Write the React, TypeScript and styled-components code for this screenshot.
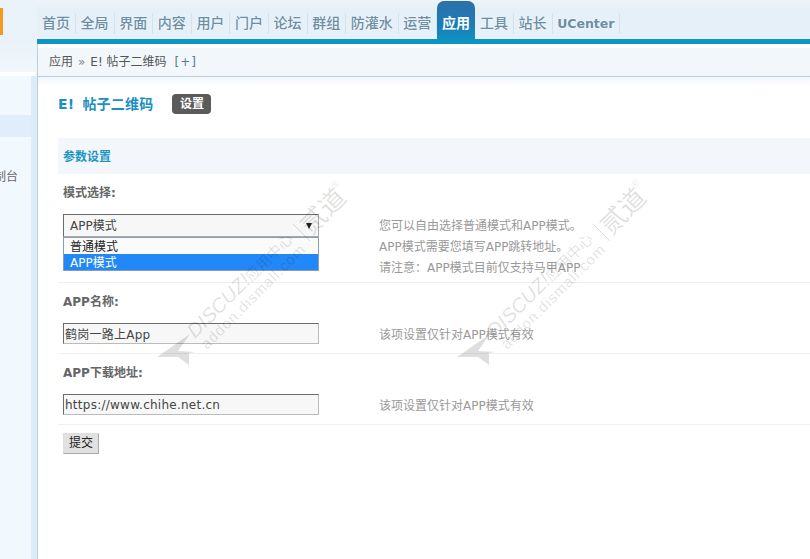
import React, { ReactElement } from 'react';
import styled, { createGlobalStyle } from 'styled-components';

const GlobalStyle = createGlobalStyle`
  html, body {
    margin: 0;
    padding: 0;
    height: 100%;
    overflow: hidden;
    background: #fff;
  }

  body {
    font: 12px/1.5 "DejaVu Sans", "Noto Sans CJK SC", sans-serif;
    color: #666;
  }
`;

const Page = styled.div`
  position: relative;
  display: flex;
  width: 100%;
  height: 100vh;
  overflow: hidden;
`;

const SideColumn = styled.aside`
  display: flex;
  flex-direction: column;
  flex: 0 0 37px;
  width: 37px;
`;

const LogoArea = styled.div`
  flex: 0 0 72px;
  padding-top: 8px;
  box-sizing: border-box;
  background: linear-gradient(#eaf2f9, #e9f2fa 40px, #f1f7fc);
`;

const LogoMark = styled.div`
  width: 3px;
  height: 27px;
  background: #f39a1c;
`;

const SideGap = styled.div`
  flex: 0 0 4px;
  background: #fff;
  border-right: 1px solid #e8f0f7;
`;

const SideMenu = styled.nav`
  flex: 1;
  display: flex;
  flex-direction: column;
  padding-top: 39px;
  background: #f2f9fe;
  border-right: 6px solid #dcedf9;
`;

const SideItem = styled.div<{ $active?: boolean }>`
  display: flex;
  justify-content: flex-end;
  height: 22px;
  line-height: 22px;
  padding-right: 13px;
  white-space: nowrap;
  color: #666;
  background: ${({ $active }) => ($active ? '#dfeefa' : 'transparent')};
  margin-bottom: ${({ $active }) => ($active ? '29px' : '0')};
`;

const MainColumn = styled.main`
  flex: 1;
  min-width: 0;
  display: flex;
  flex-direction: column;
`;

const TopNav = styled.nav`
  display: flex;
  align-items: flex-start;
  flex: 0 0 44px;
  padding-left: 5px;
  background: linear-gradient(#eef4fa 0, #e4eff8 10px, #e7f1f9 39px, #0b97c4 39px, #0b97c4 44px);
`;

const NavItem = styled.a<{ $active?: boolean }>`
  display: block;
  box-sizing: border-box;
  font-size: 14px;
  font-weight: ${({ $active }) => ($active ? 700 : 500)};
  white-space: nowrap;
  color: ${({ $active }) => ($active ? '#fff' : '#6c8ea4')};
  text-shadow: 0 0 2px #fff;
  ${({ $active }) => ($active
    ? `
    height: 43px;
    margin: 1px 5px 0 -5px;
    padding: 12px 5px 0;
    line-height: 21px;
    border-radius: 7px 7px 0 0;
    background: linear-gradient(#2e6fa9, #1a7fb8 60%, #0b97c4);
    text-shadow: none;
  `
    : `
    margin: 13px 4.6px 0 0;
    padding: 0 5px 0 0;
    height: 21px;
    line-height: 21px;
    border-right: 1px solid #d5e2ec;
  `)}
`;

const NavLatin = styled(NavItem)`
  font-size: 12.5px;
  font-weight: 700;
`;

const Workspace = styled.div`
  flex: 1;
  display: flex;
  flex-direction: column;
  border-left: 1px solid #b8cfe0;
`;

const Breadcrumb = styled.div`
  display: flex;
  align-items: center;
  height: 28px;
  margin-top: 4px;
  padding-left: 11px;
  background: #f2f7fc;
  border-bottom: 1px solid #b8cfe0;
  color: #555;
  white-space: nowrap;
`;

const CrumbArrow = styled.span`
  margin: 0 5px;
  color: #888;
`;

const CrumbToggle = styled.a`
  margin-left: 8px;
  color: #5a7a99;
  letter-spacing: 1px;
`;

const Content = styled.div`
  padding: 17px 0 0 20px;
  background: linear-gradient(#f4f8fc, #fff 10px);
`;

const TitleRow = styled.div`
  display: flex;
  align-items: center;
  height: 20px;
  gap: 19px;
  margin-bottom: 24px;
`;

const PageTitle = styled.h1`
  margin: 0;
  font-size: 14px;
  font-weight: 700;
  word-spacing: 3px;
  letter-spacing: 0.2px;
  color: #1a8fc0;
  white-space: nowrap;
`;

const Badge = styled.a`
  display: block;
  width: 39px;
  height: 20px;
  line-height: 20px;
  text-align: center;
  border-radius: 4px;
  background: #5b5b5b;
  color: #fff;
  font-weight: 700;
`;

const SectionHead = styled.h2`
  margin: 0;
  height: 36px;
  line-height: 38px;
  padding-left: 5px;
  font-size: 12px;
  font-weight: 700;
  color: #1e94c0;
  background: #f3f7fc;
`;

const Row = styled.section<{ $tall?: boolean }>`
  padding: 0 0 ${({ $tall }) => ($tall ? '3px' : '7px')} 5px;
  border-bottom: 1px solid #f0f0f0;
`;

const RowLabel = styled.label`
  display: block;
  height: 36px;
  line-height: 38px;
  font-weight: 700;
  color: #666;
`;

const RowBody = styled.div`
  display: flex;
  align-items: flex-start;
  padding-top: 4px;
`;

const Control = styled.div`
  position: relative;
  flex: 0 0 256px;
  margin-right: 60px;
`;

const SelectBox = styled.div`
  display: flex;
  align-items: center;
  justify-content: space-between;
  box-sizing: border-box;
  height: 23px;
  padding: 0 6px;
  background: #f7f7f7;
  border: 1px solid #aaa;
  border-top-color: #6b6b6b;
  border-left-color: #6b6b6b;
  color: #444;
`;

const SelectArrow = styled.span`
  width: 0;
  height: 0;
  border-left: 3px solid transparent;
  border-right: 3px solid transparent;
  border-top: 6px solid #222;
`;

const OptionList = styled.ul`
  position: absolute;
  z-index: 2;
  top: 23px;
  left: 0;
  right: 0;
  margin: 0;
  padding: 0;
  list-style: none;
  background: #fbfbfb;
  border: 1px solid #8b9bb0;
  box-sizing: border-box;
`;

const Option = styled.li<{ $selected?: boolean }>`
  height: 16px;
  line-height: 18px;
  padding-left: 6px;
  color: ${({ $selected }) => ($selected ? '#fff' : '#222')};
  background: ${({ $selected }) => ($selected ? '#2288f8' : 'transparent')};
`;

const TextInput = styled.input`
  display: block;
  box-sizing: border-box;
  width: 256px;
  height: 21px;
  margin: 0;
  padding: 0 1px;
  font: inherit;
  letter-spacing: 0.25px;
  color: #444;
  background: #f7f7f7;
  border: 1px solid #bbb;
  border-top-color: #6b6b6b;
  border-left-color: #6b6b6b;
  outline: none;
`;

const HintGroup = styled.div`
  padding-top: 2px;
`;

const Hint = styled.p`
  margin: 0;
  line-height: 21px;
  color: #999;
  white-space: nowrap;
`;

const SubmitButton = styled.button`
  display: block;
  box-sizing: border-box;
  width: 36px;
  height: 21px;
  margin: 8px 0 0 5px;
  padding: 0;
  font: inherit;
  line-height: 19px;
  color: #222;
  background: #e1e1e1;
  border: 1px solid #aaa;
  border-top-color: #ddd;
  border-left-color: #ddd;
`;

const WatermarkSvg = styled.svg<{ $left: number }>`
  position: absolute;
  z-index: 3;
  top: 170px;
  left: ${({ $left }) => $left}px;
  width: 210px;
  height: 210px;
  pointer-events: none;
  font-family: "Liberation Sans", "Noto Sans CJK SC", sans-serif;
`;

const Watermark = ({ left }: { left: number }): ReactElement => (
  <WatermarkSvg $left={left} viewBox="150 170 210 210" fill="rgba(0,0,0,0.13)">
    <polygon points="157,357 190,334 178,351 196,352 189,353 189,365 178,357" />
    <text transform="translate(195 339) rotate(-45)" fontSize="20" fontStyle="italic">
      DISCUZ!
      <tspan fontSize="15" fontStyle="normal">应用中心</tspan>
    </text>
    <text transform="translate(207 350) rotate(-45)" fontSize="15" textLength="140">
      addon.dismall.com
    </text>
    <line x1="293" y1="224" x2="310" y2="241" stroke="rgba(0,0,0,0.13)" />
    <text transform="translate(311 236) rotate(-45)" fontSize="26">贰道</text>
    <text transform="translate(335 189) rotate(-45)" fontSize="10">®</text>
  </WatermarkSvg>
);

const navItems = ['首页', '全局', '界面', '内容', '用户', '门户', '论坛', '群组', '防灌水', '运营'];

const App = (): ReactElement => (
  <Page>
    <GlobalStyle />
    <SideColumn>
      <LogoArea>
        <LogoMark />
      </LogoArea>
      <SideGap />
      <SideMenu>
        <SideItem $active />
        <SideItem>制台</SideItem>
      </SideMenu>
    </SideColumn>
    <MainColumn>
      <TopNav>
        {navItems.map((item) => <NavItem key={item}>{item}</NavItem>)}
        <NavItem $active>应用</NavItem>
        <NavItem>工具</NavItem>
        <NavItem>站长</NavItem>
        <NavLatin>UCenter</NavLatin>
      </TopNav>
      <Workspace>
        <Breadcrumb>
          应用
          <CrumbArrow>»</CrumbArrow>
          E! 帖子二维码
          <CrumbToggle>[+]</CrumbToggle>
        </Breadcrumb>
        <Content>
          <TitleRow>
            <PageTitle>E! 帖子二维码</PageTitle>
            <Badge>设置</Badge>
          </TitleRow>
          <SectionHead>参数设置</SectionHead>
          <Row $tall>
            <RowLabel>模式选择:</RowLabel>
            <RowBody>
              <Control>
                <SelectBox>
                  APP模式
                  <SelectArrow />
                </SelectBox>
                <OptionList>
                  <Option>普通模式</Option>
                  <Option $selected>APP模式</Option>
                </OptionList>
              </Control>
              <HintGroup>
                <Hint>您可以自由选择普通模式和APP模式。</Hint>
                <Hint>APP模式需要您填写APP跳转地址。</Hint>
                <Hint>请注意：APP模式目前仅支持马甲APP</Hint>
              </HintGroup>
            </RowBody>
          </Row>
          <Row>
            <RowLabel>APP名称:</RowLabel>
            <RowBody>
              <Control>
                <TextInput readOnly value="鹤岗一路上App" />
              </Control>
              <HintGroup>
                <Hint>该项设置仅针对APP模式有效</Hint>
              </HintGroup>
            </RowBody>
          </Row>
          <Row>
            <RowLabel>APP下载地址:</RowLabel>
            <RowBody>
              <Control>
                <TextInput readOnly value="https://www.chihe.net.cn" />
              </Control>
              <HintGroup>
                <Hint>该项设置仅针对APP模式有效</Hint>
              </HintGroup>
            </RowBody>
          </Row>
          <SubmitButton type="button">提交</SubmitButton>
        </Content>
      </Workspace>
    </MainColumn>
    <Watermark left={150} />
    <Watermark left={450} />
  </Page>
);

export default App;
